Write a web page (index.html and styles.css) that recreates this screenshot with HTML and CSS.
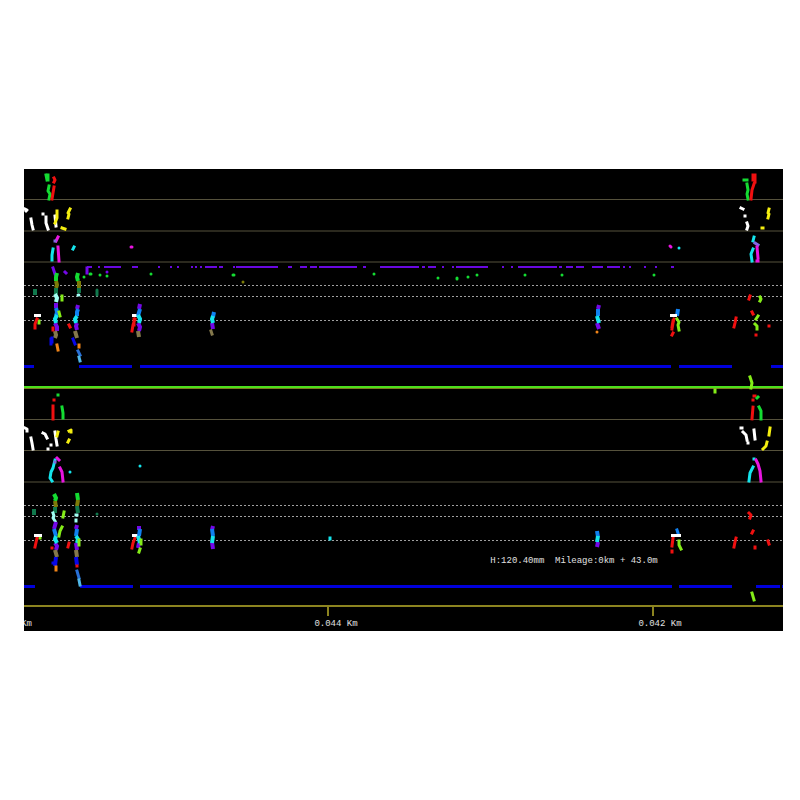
FILE: index.html
```
<!DOCTYPE html>
<html lang="en">

<head>
    <meta charset="UTF-8">
    <meta name="viewport" content="width=device-width, initial-scale=1.0">
    <title>Rail Inspection B-Scan</title>
    <link rel="stylesheet" href="styles.css">
</head>

<body>

    <main class="viewer">
        <svg class="scan" viewBox="24 169 759 462" role="img" aria-label="B-scan of left and right rail">

            <!-- Channel separators -->
            <path class="separator" d="M24 199.500H783M24 231H783M24 262H783M24 419.500H783M24 450.500H783M24 482H783" />
            <path class="gate" d="M24 285.500H783M24 296.500H783M24 320.500H783M24 505.500H783M24 516.500H783M24 540.500H783" />

            <!-- Bottom echo -->
            <path class="bottom-echo" d="M24 366.500H34M79 366.500H132M140 366.500H671M679 366.500H732M771 366.500H783" />
            <path class="bottom-echo" d="M24 586.500H35M80 586.500H133M140 586.500H672M679 586.500H732M756 586.500H780M782 586.500H783" />

            <!-- Rail divider and mileage axis -->
            <path class="divider-shadow" d="M24 388.500H783" />
            <path class="divider" d="M24 387H783" />
            <path class="axis" d="M24 606H783" />
            <path class="tick" d="M328 606V616M653 606V616" />

            <!-- Upper rail, surface echo -->
            <path class="surface" d="M87 267H92M98 267H100M104 267H121M132 267H138M158 267H160M170 267H172M177 267H179M191 267H193M195 267H197M200 267H202M205 267H217M219 267H223M233 267H235M236 267H278M288 267H292M300 267H307M310 267H317M319 267H357M363 267H366M380 267H419M422 267H425M428 267H436M442 267H444M452 267H454M456 267H488M502 267H504M511 267H513M518 267H557M559 267H562M566 267H573M576 267H584M592 267H603M607 267H620M623 267H625M629 267H631M644 267H646M655 267H657M671 267H674" />
            <path class="dot green" d="M90 274h1M84 277h0M100 275h0M107 276h0M151 274h0M233 275h1M374 274h0M438 278h0M457 278v1M468 277h0M477 275h0M525 275h0M562 275h0M654 275h0" />
            <path class="dot olive" d="M243 282h0" />
            <path class="dot purple" d="M107 272h0" />

            <!-- Upper rail, left joint -->
            <path class="echo green" d="M46 175L47 180M48 175V180M49 186L48 191L50 194L49 199" />
            <path class="echo red" d="M54 178L55 180L54 182M54 187L53 193L52 199" />
            <path class="echo white" d="M25 209L27 210L26 211M31 219L32 225L33 229M43 214h0M46 217L46 223L48 229M55 216L56 226" />
            <path class="echo yellow" d="M57 211L57 218L55 223M70 209L68 213L69 214L68 218M62 228L65 229" />
            <path class="echo magenta" d="M58 237L56 241M58 247L59 261" />
            <path class="echo violet" d="M55 241h0" />
            <path class="echo cyan" d="M53 249L52 255L52 260M74 247L73 249" />
            <path class="echo purple" d="M53 268L55 274M65 272L66 273M87 268V273" />
            <path class="dot magenta" d="M131 247h1" />

            <path class="stack green" d="M57 273L56 277L56 281M78 273L77 277L78 281" />
            <path class="stack olive" d="M56 281L57 285L56 288M79 281V288" />
            <path class="stack teal" d="M56 288V294M79 288V293M35 289V295" />
            <path class="dot teal" d="M97 290V295" />
            <path class="stack ice" d="M55 294L57 298L56 302" />
            <path class="dot ice" d="M78 295h1" />
            <path class="stack purple" d="M56 303V308M78 305L77 309M55 323L57 327L57 331M77 323L76 326L77 330" />
            <path class="stack blue" d="M56 308L57 312L56 316M78 309L77 312L77 316" />
            <path class="stack cyan" d="M57 315L55 319L56 323M77 316L75 319L76 323" />
            <path class="stack khaki" d="M55 331L56 335L55 338M75 331L77 338" />
            <path class="echo navy" d="M51 339V344M52 338V342M73 339L75 344" />
            <path class="echo orange" d="M57 345L58 350M79 345L79 347" />
            <path class="echo steel" d="M78 351L80 355" />
            <path class="echo sky" d="M79 357L80 361" />
            <path class="echo lime" d="M62 296L62 300M59 312L60 316M39 321L39 323" />
            <path class="echo red" d="M53 328V330M69 325L70 327M37 319L35 324L35 328" />
            <path class="stack white" d="M34 315.500H41" />

            <!-- Upper rail, bolt holes -->
            <path class="echo red" d="M135 319L133 325L132 331M134 319L134 325" />
            <path class="stack white" d="M132 315.500H138" />
            <path class="stack purple" d="M140 304L139 309M138 323L140 327L139 331M212 323L213 329M599 305L598 309M597 323L599 329" />
            <path class="stack blue" d="M140 309L138 316M214 312L213 317M598 309L598 316" />
            <path class="stack cyan" d="M138 315L140 319L139 323M213 316L212 319L213 323M597 316L599 323" />
            <path class="stack khaki" d="M138 331L139 337" />
            <path class="echo khaki" d="M211 331L212 334" />
            <path class="dot orange" d="M597 332h0" />
            <path class="echo red" d="M674 319L673 323L672 329M673 321L672 327M673 333L672 335" />
            <path class="echo lime" d="M677 319L679 322L678 325L679 330" />
            <path class="stack blue" d="M678 309L677 316" />
            <path class="stack white" d="M670 315.500H677" />

            <!-- Upper rail, right joint -->
            <path class="echo green" d="M744 180H747M747 184L748 190L747 194L748 199" />
            <path class="echo red" d="M753 175V180M755 175L755 182M754 184L752 190L751 199" />
            <path class="echo white" d="M741 208L743 209M745 216h0M747 223L748 226L747 229" />
            <path class="echo yellow" d="M769 209L768 213L769 214L768 218M762 228h1" />
            <path class="echo cyan" d="M754 237L753 241M753 249L751 254L752 261" />
            <path class="echo violet" d="M755 243L758 245" />
            <path class="echo magenta" d="M757 247L758 258M757 261h1" />
            <path class="dot magenta" d="M670 246L671 247" />
            <path class="dot cyan" d="M679 248h0" />
            <path class="echo red" d="M736 318L735 323L734 327M750 296L749 299M752 312L753 314M756 335h0M769 326h0" />
            <path class="echo lime" d="M760 297L761 299L760 301M758 316L756 319M755 324L757 326L757 329" />
            <path class="echo lime" d="M750 377L752 383L751 388M715 390L715 392" />

            <!-- Lower rail, left joint -->
            <path class="echo red" d="M54 400h0M53 406L53 419" />
            <path class="echo green" d="M58 395h0M62 407L63 413L63 418" />
            <path class="echo white" d="M25 428L27 429L27 431M31 438L32 443L33 449M43 433L45 434L47 438M51 445h0M48 449h0M55 432L56 439L57 445" />
            <path class="echo yellow" d="M58 432L57 436M69 431L71 430L71 432M69 440L68 442" />
            <path class="echo cyan" d="M55 460L53 468L51 472L50 478L52 481" />
            <path class="echo magenta" d="M57 458L59 460M60 468L62 472L63 481" />
            <path class="echo violet" d="M55 462h0" />
            <path class="dot cyan" d="M70 472h0M140 466h0" />

            <path class="stack green" d="M54 494L56 498L55 501M77 493L78 500" />
            <path class="stack olive" d="M55 501L56 507M78 500L77 506" />
            <path class="stack teal" d="M55 507V513M77 506L78 513M34 509V515" />
            <path class="dot teal" d="M97 514h0" />
            <path class="echo ice" d="M53 513L54 516L53 518L55 521M76 515h1M76 520V521" />
            <path class="stack purple" d="M56 522L54 529M77 525L76 529M55 543L57 546L56 550M76 543L77 550" />
            <path class="stack blue" d="M54 529L56 536M77 529L76 536" />
            <path class="stack cyan" d="M56 536L55 539L57 543M76 536L78 539L77 543" />
            <path class="stack khaki" d="M55 550L57 557M76 550L77 557" />
            <path class="stack navy" d="M56 557L55 566M76 557L77 565" />
            <path class="echo navy" d="M53 563h0" />
            <path class="echo orange" d="M56 567L56 570" />
            <path class="echo steel" d="M77 571L79 578" />
            <path class="echo sky" d="M79 580L80 585" />
            <path class="echo lime" d="M64 512L63 517M62 527L60 531L59 536M79 540L79 545M40 538h0" />
            <path class="echo red" d="M52 548h0M69 543L68 547M37 538L35 547M77 566h0" />
            <path class="stack white" d="M34 535.500H42" />

            <!-- Lower rail, bolt holes -->
            <path class="echo red" d="M135 538L133 543L132 548" />
            <path class="stack white" d="M132 535.500H138" />
            <path class="stack purple" d="M139 526V530M139 543L138 548M213 526L212 530M212 542L213 549M598 542L597 547" />
            <path class="stack blue" d="M140 529L139 536M212 529L213 536M597 531L598 537" />
            <path class="stack cyan" d="M138 536L140 543M213 536L212 543M598 536L597 542" />
            <path class="echo lime" d="M141 540V544M140 549L139 552" />
            <path class="echo cyan" d="M330 538V539" />
            <path class="echo red" d="M673 538L672 546M672 551V552" />
            <path class="echo lime" d="M679 541L679 545L681 549" />
            <path class="echo blue" d="M677 530L678 533" />
            <path class="stack white" d="M671 535.500H681" />

            <!-- Lower rail, right joint -->
            <path class="echo red" d="M754 396h1M753 400h0M753 407L752 419" />
            <path class="echo green" d="M757 398L758 397M759 407L761 411L761 419" />
            <path class="echo white" d="M741 428H742M743 432L746 435L747 440M748 443h0M754 430L755 439" />
            <path class="echo yellow" d="M770 428L769 435M767 442L766 446L763 449" />
            <path class="echo cyan" d="M754 459h0M753 467L750 473L749 481" />
            <path class="echo magenta" d="M756 460L758 464L760 471L761 481" />
            <path class="echo red" d="M736 538L735 542L734 547M749 513L751 515L750 518M753 531L752 533M755 547V548M768 541L769 544" />
            <path class="echo lime" d="M752 593L754 600" />

            <!-- Labels -->
            <text class="label" x="32" y="626" text-anchor="end">Km</text>
            <text class="label" x="336" y="626" text-anchor="middle">0.044 Km</text>
            <text class="label" x="660" y="626" text-anchor="middle">0.042 Km</text>
            <text class="label readout" x="574" y="563" text-anchor="middle">H:120.40mm  Mileage:0km + 43.0m</text>
        </svg>
    </main>

</body>

</html>
```
FILE: styles.css
```
body {
    margin: 0;
    background-color: #fff;
    font-family: "Liberation Mono", monospace;
}

.viewer {
    box-sizing: border-box;
    display: flex;
    align-items: center;
    min-height: 100vh;
    padding: 0 17px 0 24px;
}

.scan {
    display: block;
    width: 100%;
    background-color: #000;
}

.scan path {
    fill: none;
}

.separator {
    stroke: #56523c;
    stroke-width: 1;
}

.gate {
    stroke: #a0a0a0;
    stroke-width: 1;
    stroke-dasharray: 2 2;
}

.bottom-echo {
    stroke: #0000dc;
    stroke-width: 3;
}

.divider {
    stroke: #4ce01c;
    stroke-width: 2;
}

.divider-shadow {
    stroke: #7c7c20;
    stroke-width: 1;
}

.axis,
.tick {
    stroke: #8c8420;
    stroke-width: 2;
}

.surface {
    stroke: #6a08e0;
    stroke-width: 2;
}

.echo,
.dot {
    stroke-width: 3;
    stroke-linecap: square;
    stroke-linejoin: round;
}

.dot {
    stroke-linecap: round;
}

.stack {
    stroke-width: 4;
}

.stack.white {
    stroke-width: 3;
}

.green { stroke: #14dc32; }
.red { stroke: #f01010; }
.white { stroke: #fff; }
.yellow { stroke: #f4ee10; }
.magenta { stroke: #e814e0; }
.cyan { stroke: #14e4ec; }
.violet { stroke: #8068e0; }
.purple { stroke: #7408e8; }
.blue { stroke: #1080f0; }
.navy { stroke: #0808e8; }
.steel { stroke: #2870d8; }
.sky { stroke: #50b8e8; }
.ice { stroke: #a0fff4; }
.teal { stroke: #10784c; }
.olive { stroke: #7c7c08; }
.khaki { stroke: #84784c; }
.orange { stroke: #f08418; }
.lime { stroke: #84ec18; }

.label {
    fill: #e0e0e0;
    font-size: 9px;
}

.readout {
    white-space: pre;
}
```
